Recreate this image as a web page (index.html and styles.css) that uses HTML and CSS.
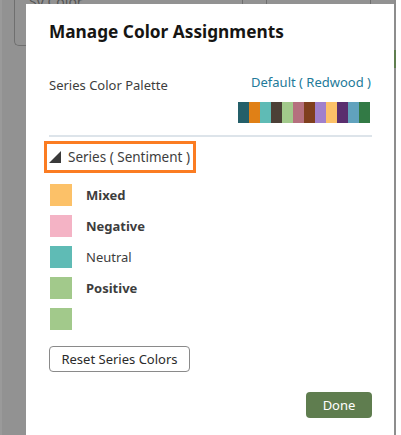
FILE: index.html
```html
<!DOCTYPE html>
<html>
<head>
<meta charset="utf-8">
<link rel="stylesheet" href="styles.css">
</head>
<body>
<div class="backdrop">
  <div class="bg-left">
    <div class="bg-card"><span class="bg-card-title">Sy Color</span></div>
  </div>
  <div class="bg-mid">
    <div class="bg-ticks"><span class="tick t1"></span><span class="tick t2"></span><span class="tick t3"></span></div>
  </div>
  <div class="bg-strip"><span class="strip-green"></span></div>
  <div class="bg-right"></div>
</div>

<div class="dialog">
  <h1 class="title">Manage Color Assignments</h1>

  <div class="palette-row">
    <span class="palette-label">Series Color Palette</span>
    <div class="palette-pick">
      <a class="palette-link">Default ( Redwood )</a>
      <div class="swatches">
        <span class="sw" style="background:#245f69"></span>
        <span class="sw" style="background:#e08016"></span>
        <span class="sw" style="background:#5fbbb5"></span>
        <span class="sw" style="background:#4c4037"></span>
        <span class="sw" style="background:#a2c98b"></span>
        <span class="sw" style="background:#b5707e"></span>
        <span class="sw" style="background:#7f3f1e"></span>
        <span class="sw" style="background:#a080cc"></span>
        <span class="sw" style="background:#fcc168"></span>
        <span class="sw" style="background:#5a2e6e"></span>
        <span class="sw" style="background:#61a2bd"></span>
        <span class="sw" style="background:#327a45"></span>
      </div>
    </div>
  </div>

  <hr class="sep">

  <div class="series-head">
    <svg class="tri" width="13" height="13" viewBox="0 0 13 13"><polygon points="12,0 12,12 0,12" fill="#3a3a3a"/></svg>
    <span>Series ( Sentiment )</span>
  </div>

  <ul class="series-list">
    <li><span class="chip" style="background:#fcc168"></span><span class="name bold">Mixed</span></li>
    <li><span class="chip" style="background:#f4b3c5"></span><span class="name bold">Negative</span></li>
    <li><span class="chip" style="background:#5fbbb5"></span><span class="name">Neutral</span></li>
    <li><span class="chip" style="background:#a2c98b"></span><span class="name bold">Positive</span></li>
    <li><span class="chip" style="background:#a2c98b"></span><span class="name"></span></li>
  </ul>

  <button class="btn-reset">Reset Series Colors</button>

  <div class="footer">
    <button class="btn-done">Done</button>
  </div>
</div>
</body>
</html>
```
FILE: styles.css
```css
html, body {
  margin: 0;
  padding: 0;
}
body {
  width: 401px;
  height: 435px;
  overflow: hidden;
  position: relative;
  font-family: "Noto Sans", "Open Sans", sans-serif;
  background: #929292;
}
.backdrop {
  display: flex;
  height: 435px;
}
.bg-left {
  width: 26px;
  background: #929292;
  border-left: 2px solid #9a9a9a;
  box-sizing: border-box;
  position: relative;
}
.bg-card {
  margin-left: 12px;
  width: 60px;
  height: 50px;
  margin-top: -4px;
  border-left: 1px solid #6f6f6f;
  border-bottom: 1px solid #6f6f6f;
  border-bottom-left-radius: 5px;
  box-sizing: border-box;
  white-space: nowrap;
}
.bg-card-title {
  display: block;
  padding-left: 14px;
  font-size: 14px;
  color: #555;
  line-height: 12px;
}
.bg-mid {
  width: 368px;
  background: #929292;
}
.bg-ticks {
  height: 4px;
  position: relative;
}
.tick {
  position: absolute;
  top: 0;
  width: 1px;
  height: 4px;
  background: #6e6e6e;
}
.t1 { left: 216px; }
.t2 { left: 240px; }
.t3 { left: 344px; }
.bg-strip {
  width: 2px;
  background: #8d8d8d;
  position: relative;
}
.strip-green {
  position: absolute;
  top: 50px;
  left: 0;
  width: 2px;
  height: 18px;
  background: #5f7d4f;
}
.bg-right {
  flex: 1;
  background: #ffffff;
}

.dialog {
  position: absolute;
  left: 26px;
  top: 4px;
  width: 368px;
  bottom: 0;
  background: #fff;
  box-sizing: border-box;
  padding: 16px 22px 0 23px;
  color: #3d3d3d;
}
.title {
  margin: 0;
  font-size: 17.25px;
  line-height: 24px;
  font-weight: 700;
  color: #161513;
}
.palette-row {
  display: flex;
  justify-content: space-between;
  margin-top: 29px;
}
.palette-label {
  font-size: 13px;
  line-height: 18px;
  margin-top: 3px;
  color: #3d3d3d;
}
.palette-pick {
  display: flex;
  flex-direction: column;
  align-items: flex-end;
}
.palette-link {
  font-size: 13px;
  line-height: 18px;
  color: #227a99;
  margin-right: 1px;
}
.swatches {
  display: flex;
  margin-top: 11px;
  margin-right: 2px;
}
.sw {
  width: 11px;
  height: 21px;
}
.sep {
  margin: 12px 0 0;
  border: 0;
  border-top: 2px solid #dde4ea;
  height: 0;
}
.series-head {
  display: inline-flex;
  align-items: center;
  gap: 6px;
  margin: 4px 0 0 -5px;
  padding: 0 3px 0 2px;
  border: 3px solid #fb7c22;
  height: 32px;
  box-sizing: border-box;
  font-size: 13.5px;
  color: #3d3d3d;
}
.tri {
  display: block;
}
.series-list {
  list-style: none;
  margin: 11px 0 0;
  padding: 0 0 0 1px;
  display: flex;
  flex-direction: column;
  gap: 9px;
}
.series-list li {
  display: flex;
  align-items: center;
  height: 22px;
}
.chip {
  width: 22px;
  height: 22px;
  flex: none;
}
.name {
  margin-left: 14px;
  font-size: 13px;
  color: #3d3d3d;
}
.name.bold {
  font-weight: 700;
}
.btn-reset {
  margin-top: 16px;
  display: block;
  width: 141px;
  height: 26px;
  padding: 0;
  background: #fff;
  border: 1px solid #8a8a8a;
  border-radius: 4px;
  font-family: inherit;
  font-size: 13px;
  color: #2b2b2b;
}
.footer {
  display: flex;
  justify-content: flex-end;
  margin-top: 20px;
}
.btn-done {
  width: 66px;
  height: 26px;
  padding: 0;
  border: 0;
  border-radius: 4px;
  background: #5f7d4f;
  color: #fff;
  font-family: inherit;
  font-size: 13px;
}
```
